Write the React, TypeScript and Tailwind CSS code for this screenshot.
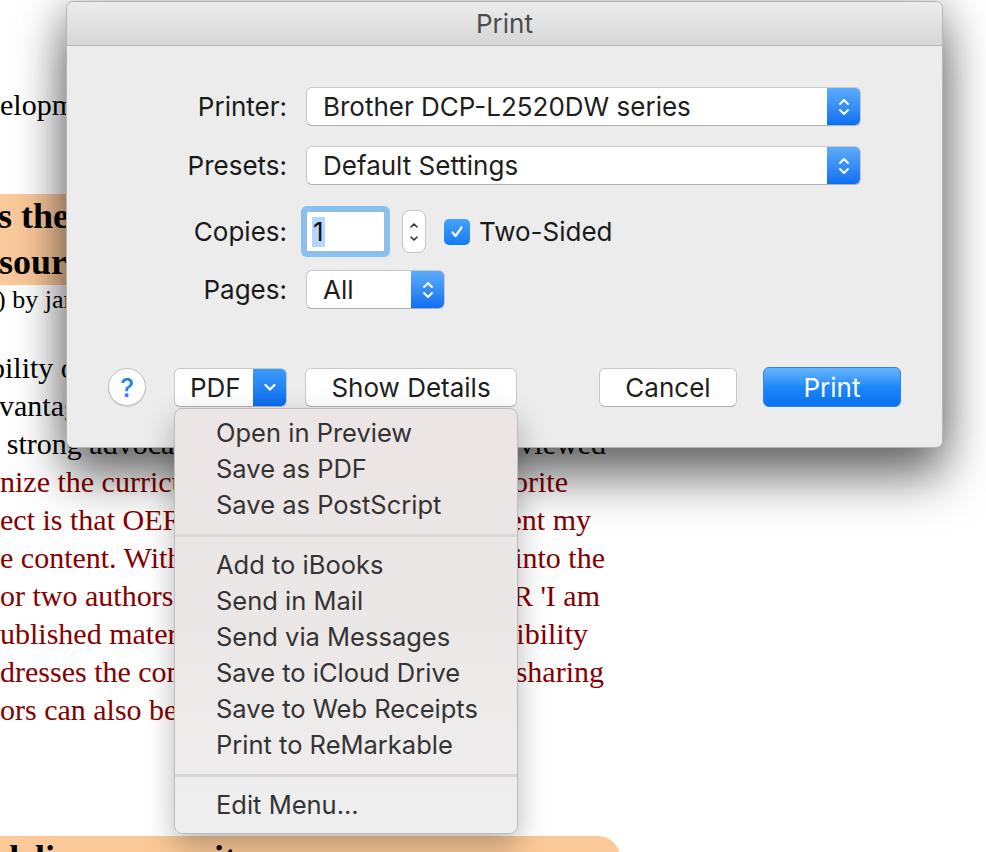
import React from 'react';

const ui = "font-['Inter','Liberation_Sans',sans-serif]";

function UpDown({ className = '' }: { className?: string }) {
  return (
    <svg width="14" height="24" viewBox="0 0 14 24" className={className} fill="none" stroke="currentColor" strokeWidth="2" strokeLinecap="round" strokeLinejoin="round">
      <path d="M3 9l4-4 4 4" />
      <path d="M3 15l4 4 4-4" />
    </svg>
  );
}

function Popup({ label, width }: { label: string; width: string }) {
  return (
    <div className={`flex h-[39px] ${width} rounded-[6px] bg-white border border-[#c8c8c8] border-b-[#b0b0b0] overflow-hidden`}>
      <span className="flex-1 flex items-center pl-[16px] text-[26px] text-[#1e1e1e]">{label}</span>
      <span className="w-[33px] flex items-center justify-center bg-gradient-to-b from-[#5cacfa] to-[#0a6ff2] text-white">
        <UpDown />
      </span>
    </div>
  );
}

function Label({ children }: { children: React.ReactNode }) {
  return <span className="w-[220px] shrink-0 text-right text-[26px] text-[#1a1a1a]">{children}</span>;
}

const menu = [
  ['Open in Preview', 'Save as PDF', 'Save as PostScript'],
  ['Add to iBooks', 'Send in Mail', 'Send via Messages', 'Save to iCloud Drive', 'Save to Web Receipts', 'Print to ReMarkable'],
  ['Edit Menu...'],
];

const para = [
  { left: 'bility of', right: '', end: 'w-[606px]', red: false, pad: '-ml-[10px]' },
  { left: 'vantage', right: '', end: 'w-[606px]', red: false, pad: '-ml-[1px]' },
  { left: 'a strong advocate', right: 'reviewed', end: 'w-[606px]', red: false, pad: '-ml-[14px]' },
  { left: 'nize the curriculum', right: 'favorite', end: 'w-[568px]', red: true, pad: '' },
  { left: 'ect is that OER', right: 'supplement my', end: 'w-[591px]', red: true, pad: '' },
  { left: 'e content. With', right: 'into the', end: 'w-[605px]', red: true, pad: '' },
  { left: 'or two authors', right: "OER 'I am", end: 'w-[600px]', red: true, pad: '' },
  { left: 'ublished materials', right: 'accessibility', end: 'w-[588px]', red: true, pad: '' },
  { left: 'dresses the concern', right: 'and sharing', end: 'w-[604px]', red: true, pad: '' },
  { left: 'ors can also be', right: '', end: 'w-[604px]', red: true, pad: '' },
];

export default function App() {
  return (
    <div className="relative w-[986px] h-[852px] overflow-hidden bg-white">
      {/* page behind the sheet */}
      <div className="font-['Liberation_Serif',serif] text-black whitespace-nowrap pt-[87px]">
        <div className="text-[30px] leading-[36px]">elopment</div>
        <div className="mt-[71px] w-[700px] bg-[#fac99a] font-bold text-[36px] leading-[45.5px]">
          <div className="-ml-[2px]">s the</div>
          <div className="-ml-[1px]">sour</div>
        </div>
        <div className="text-[26px] leading-[30px] -ml-[3px]">) by jane</div>
        <div className="mt-[34px] text-[30px] leading-[38px]">
          {para.map((l, i) => (
            <div key={i} className={`flex justify-between ${l.end} ${l.red ? 'text-[#850000]' : 'text-black'}`}>
              <span className={l.pad}>{l.left}</span>
              <span>{l.right}</span>
            </div>
          ))}
        </div>
        <div className="mt-[107px] w-[620px] h-[60px] rounded-tr-[22px] bg-[#fbc997] font-bold text-[36px] leading-[44px]">
          <span className="-ml-[1px]">delivery security</span>
        </div>
      </div>

      {/* print sheet */}
      <div className={`absolute left-[66px] top-[1px] w-[877px] h-[447px] rounded-[7px] bg-[#ececec] border border-[#b4b4b4] shadow-[0_0_45px_rgba(0,0,0,0.28),0_30px_50px_rgba(0,0,0,0.52)] ${ui}`}>
        <div className="h-[44px] rounded-t-[7px] border-b border-[#b7b7b7] bg-gradient-to-b from-[#ececec] to-[#d6d6d6] flex items-center justify-center text-[26px] text-[#4d4d4d]">
          Print
        </div>

        <div className="flex flex-col pt-[41px]">
          <div className="flex items-center gap-[19px]">
            <Label>Printer:</Label>
            <Popup label="Brother DCP-L2520DW series" width="w-[555px]" />
          </div>
          <div className="flex items-center gap-[19px] mt-[20px]">
            <Label>Presets:</Label>
            <Popup label="Default Settings" width="w-[555px]" />
          </div>
          <div className="flex items-center gap-[19px] mt-[25px]">
            <Label>Copies:</Label>
            <div className="flex items-center">
              <div className="w-[79px] h-[41px] bg-white border border-[#9fb9d2] rounded-[2px] shadow-[0_0_0_5px_#86c1f1] flex items-center pl-[5px]">
                <span className="bg-[#b4d7fe] text-[26px] leading-[30px] px-[1px] text-[#111]">1</span>
              </div>
              <div className="ml-[17px] w-[24px] h-[43px] rounded-[8px] bg-white border border-[#c4c4c4] flex items-center justify-center text-[#333]">
                <svg width="10" height="28" viewBox="0 0 10 28" fill="none" stroke="currentColor" strokeWidth="1.6" strokeLinecap="round" strokeLinejoin="round">
                  <path d="M2 9l3-3 3 3" />
                  <path d="M2 19l3 3 3-3" />
                </svg>
              </div>
              <div className="ml-[18px] w-[26px] h-[26px] rounded-[5px] bg-gradient-to-b from-[#43a3fa] to-[#0f7bf2] flex items-center justify-center">
                <svg width="18" height="18" viewBox="0 0 18 18" fill="none" stroke="white" strokeWidth="2.2" strokeLinecap="round" strokeLinejoin="round">
                  <path d="M4.5 9.5l3 3.5 6-8.5" />
                </svg>
              </div>
              <span className="ml-[9px] text-[26px] text-[#1a1a1a]">Two-Sided</span>
            </div>
          </div>
          <div className="flex items-center gap-[19px] mt-[17px]">
            <Label>Pages:</Label>
            <Popup label="All" width="w-[139px]" />
          </div>

          {/* bottom buttons */}
          <div className="flex items-center mt-[58px] pl-[41px] pr-[41px]">
            <div className="w-[38px] h-[38px] rounded-full bg-white border border-[#c2c2c2] shadow-[0_1px_1px_rgba(0,0,0,0.12)] flex items-center justify-center text-[26px] font-medium text-[#1b84f2]">
              ?
            </div>
            <div className="relative ml-[28px]">
              <div className="flex w-[113px] h-[39px] rounded-[6px] bg-white border border-[#c8c8c8] border-b-[#b0b0b0] overflow-hidden">
                <span className="flex-1 flex items-center pl-[15px] text-[26px] text-[#1e1e1e]">PDF</span>
                <span className="w-[33px] flex items-center justify-center bg-gradient-to-b from-[#3b9bfa] to-[#0a6af0] text-white">
                  <svg width="14" height="10" viewBox="0 0 14 10" fill="none" stroke="currentColor" strokeWidth="2.2" strokeLinecap="round" strokeLinejoin="round">
                    <path d="M2.5 3l4.5 4.5 4.5-4.5" />
                  </svg>
                </span>
              </div>

              {/* PDF menu */}
              <div className="absolute left-0 top-[40px] z-10 w-[344px] rounded-[8px] border border-[#bcbcbc] bg-gradient-to-b from-[#ebe5e5] via-[#ece7e7] to-[#efefef] shadow-[0_12px_30px_rgba(0,0,0,0.28)] pt-[7px] pb-[9px]">
                {menu.map((group, gi) => (
                  <div key={gi}>
                    {gi > 0 && (
                      <div className="h-[24px] flex items-center">
                        <div className="h-[3px] w-full bg-[#dcd8d8]" />
                      </div>
                    )}
                    {group.map((item) => (
                      <div key={item} className="h-[36px] flex items-center pl-[41px] text-[25.5px] text-[#343434]">
                        {item}
                      </div>
                    ))}
                  </div>
                ))}
              </div>
            </div>
            <div className="ml-[18px] w-[212px] h-[39px] rounded-[6px] bg-white border border-[#c8c8c8] border-b-[#b0b0b0] flex items-center justify-center text-[26px] text-[#1e1e1e]">
              Show Details
            </div>
            <div className="flex-1" />
            <div className="w-[138px] h-[39px] rounded-[6px] bg-white border border-[#c8c8c8] border-b-[#b0b0b0] flex items-center justify-center text-[26px] text-[#1e1e1e]">
              Cancel
            </div>
            <div className="ml-[26px] w-[138px] h-[40px] rounded-[6px] bg-gradient-to-b from-[#67b5fb] via-[#1c88f8] to-[#0a70f3] border border-[#2a83ee] flex items-center justify-center text-[26px] text-white">
              Print
            </div>
          </div>
        </div>
      </div>
    </div>
  );
}
